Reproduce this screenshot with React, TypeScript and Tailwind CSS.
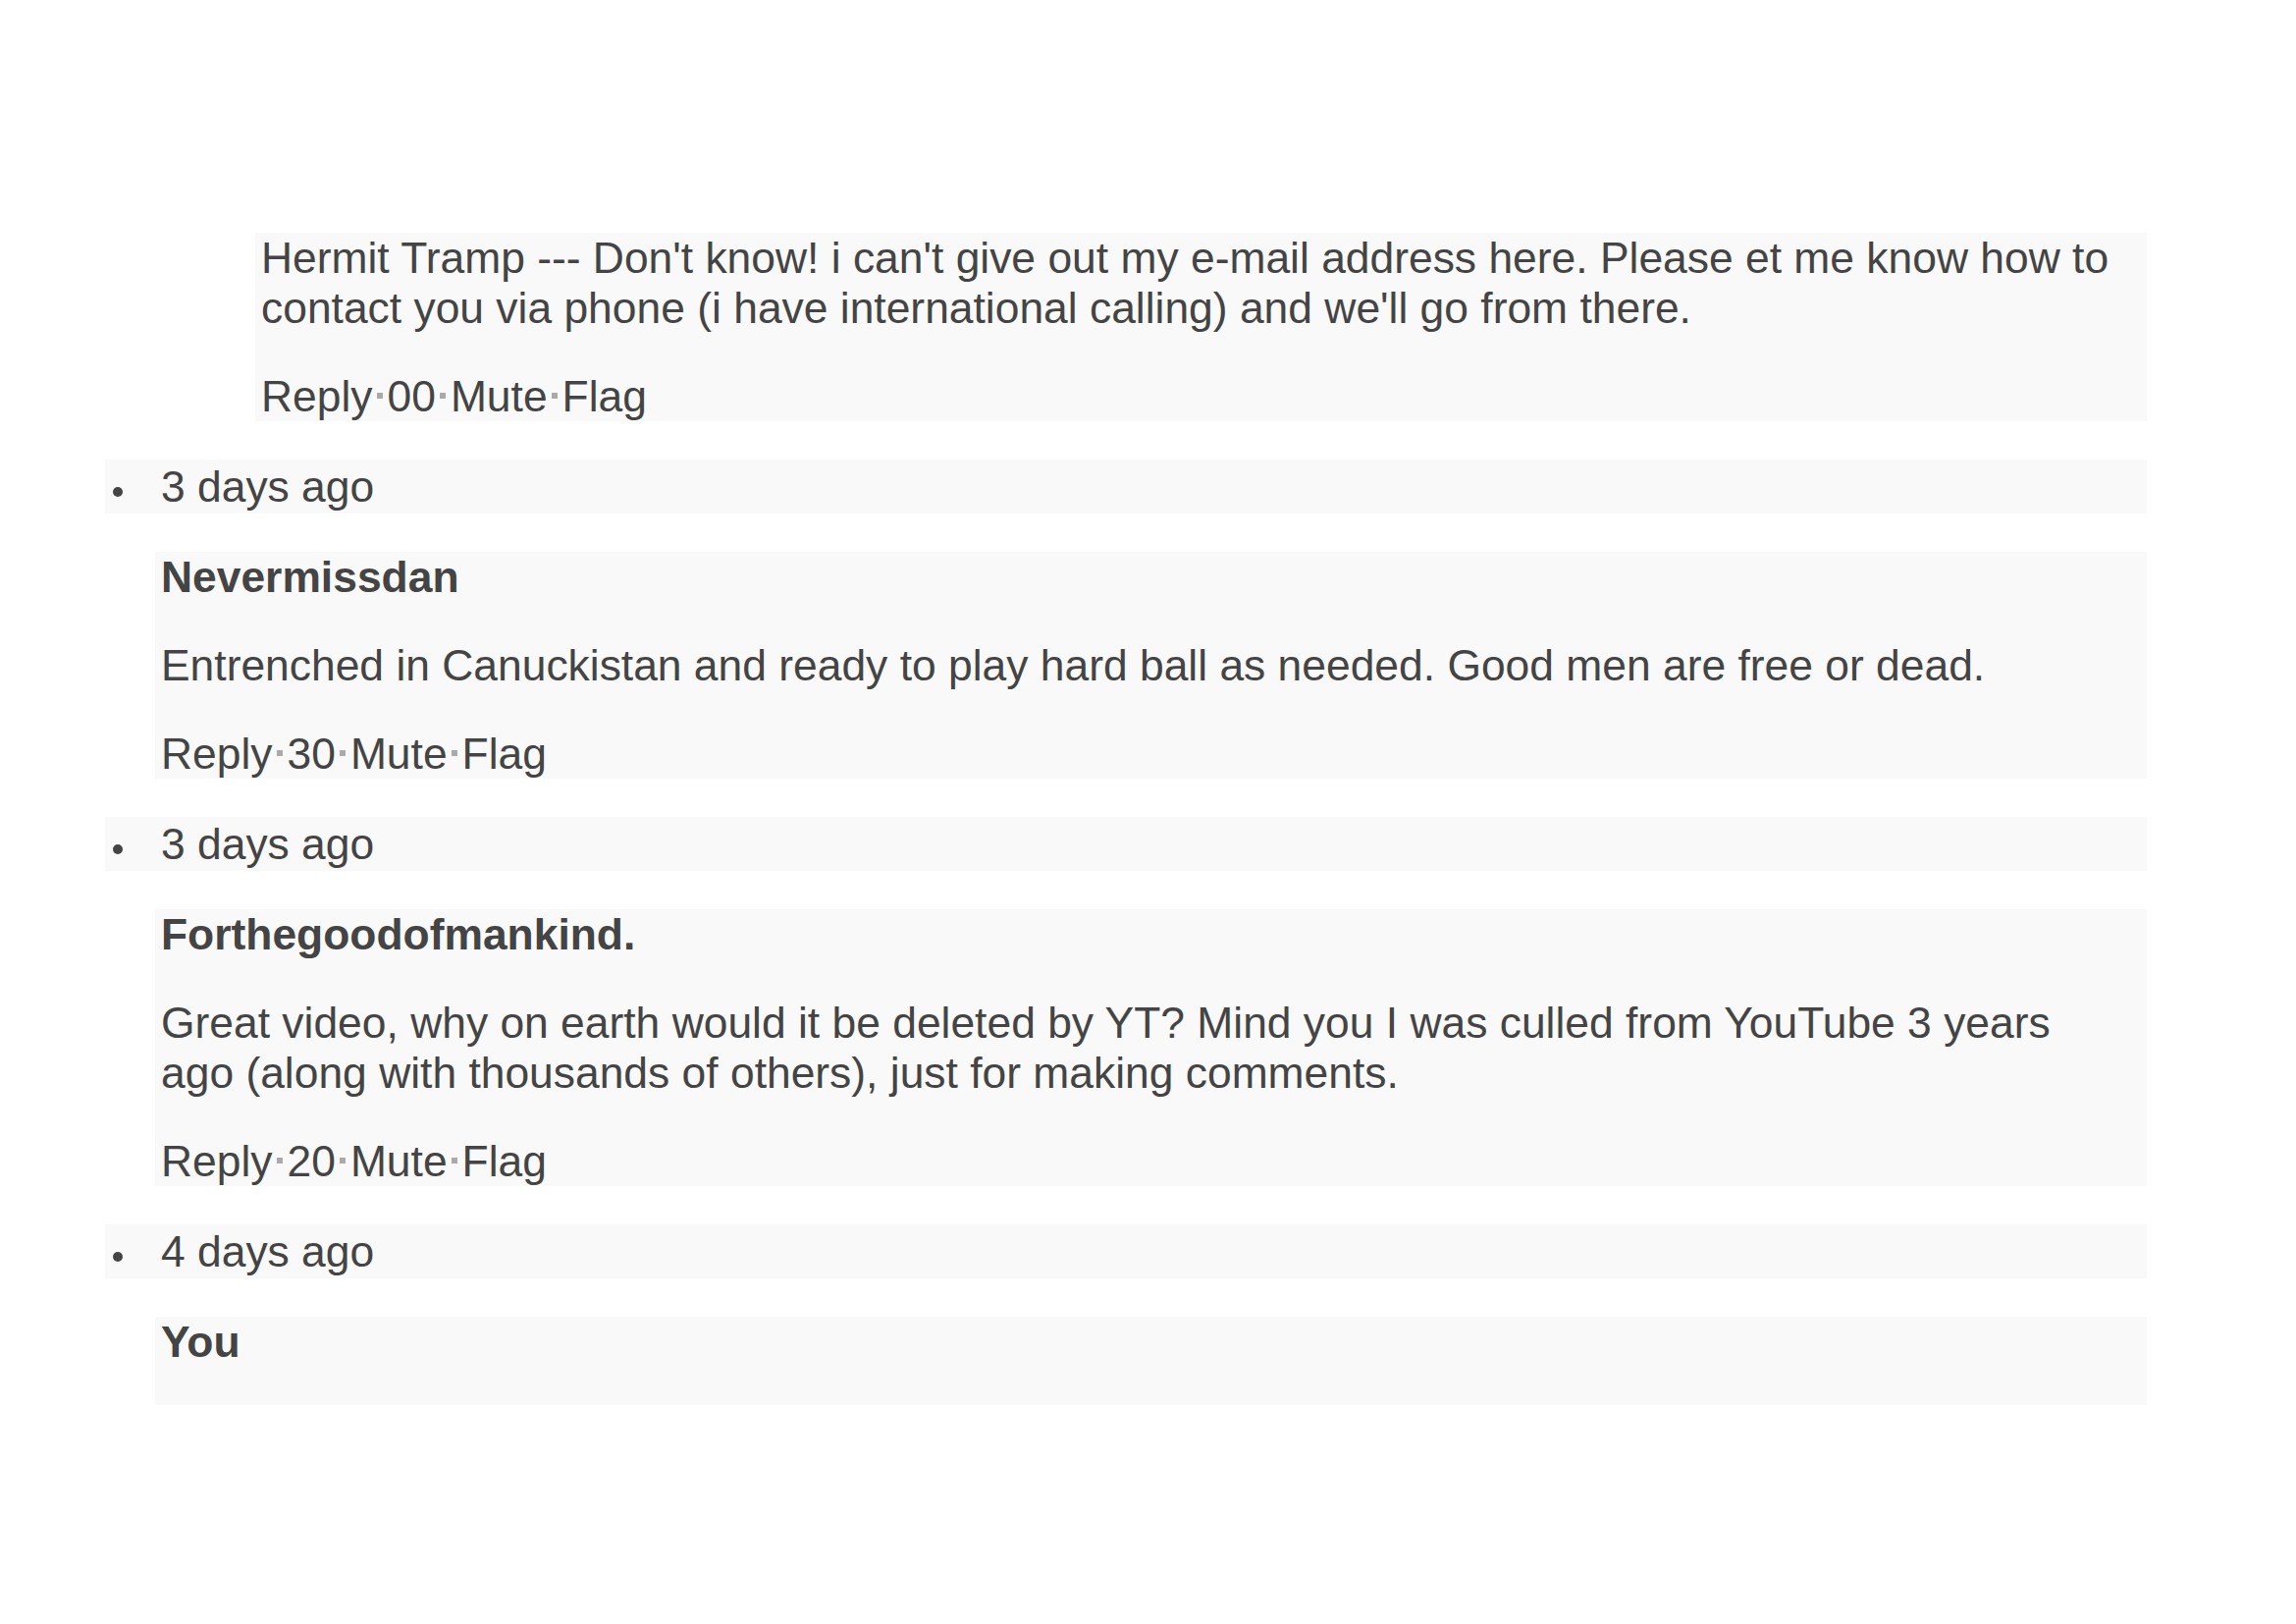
import React from "react";

function Dot() {
  return <span className="inline-block w-[6px] h-[6px] bg-[#aaaaaa] ml-[4px] mr-[5px] align-[0.3em]" />;
}

function Actions({ n }: { n: string }) {
  return (
    <p className="m-0">
      Reply<Dot />
      {n}
      <Dot />Mute<Dot />Flag
    </p>
  );
}

function DateRow({ text }: { text: string }) {
  return (
    <div className="flex items-center bg-[#f9f9f9] h-[55px]">
      <div className="w-[57px] flex justify-start pl-[8px] pt-[10px]">
        <span className="block w-[10px] h-[10px] rounded-full bg-[#444444]" />
      </div>
      <span>{text}</span>
    </div>
  );
}

export default function App() {
  return (
    <div className="min-h-screen bg-white font-['Liberation_Sans',Arial,sans-serif] text-[44.4px] leading-[51px] text-[#444444]">
      <div className="pt-[237px] pl-[107px] w-[2187px] flex flex-col gap-[39px]">
        <div className="ml-[153px] bg-[#f9f9f9] pl-[6px] pr-[22px] flex flex-col gap-[39px]">
          <p className="m-0">
            Hermit Tramp --- Don't know! i can't give out my e-mail address here. Please et me know how to contact you via phone (i have international calling) and we'll go from there.
          </p>
          <Actions n="00" />
        </div>

        <DateRow text="3 days ago" />

        <div className="ml-[51px] bg-[#f9f9f9] pl-[6px] pr-[22px] flex flex-col gap-[39px]">
          <p className="m-0 font-bold">Nevermissdan</p>
          <p className="m-0">
            Entrenched in Canuckistan and ready to play hard ball as needed. Good men are free or dead.
          </p>
          <Actions n="30" />
        </div>

        <DateRow text="3 days ago" />

        <div className="ml-[51px] bg-[#f9f9f9] pl-[6px] pr-[22px] flex flex-col gap-[39px]">
          <p className="m-0 font-bold">Forthegoodofmankind.</p>
          <p className="m-0">
            Great video, why on earth would it be deleted by YT? Mind you I was culled from YouTube 3 years ago (along with thousands of others), just for making comments.
          </p>
          <Actions n="20" />
        </div>

        <DateRow text="4 days ago" />

        <div className="ml-[51px] bg-[#f9f9f9] pl-[6px] pr-[22px] pb-[39px] flex flex-col gap-[39px]">
          <p className="m-0 font-bold">You</p>
        </div>
      </div>
    </div>
  );
}
